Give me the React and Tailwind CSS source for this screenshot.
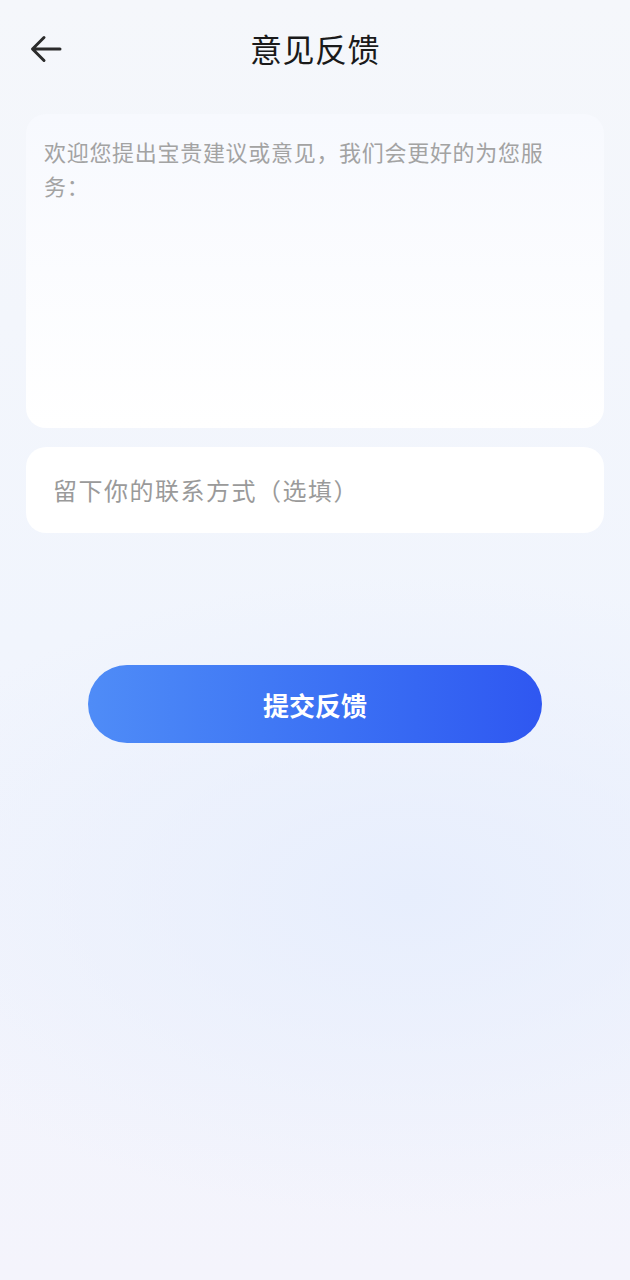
import { useState } from 'react'

export default function App() {
  const [advice, setAdvice] = useState('')
  const [contact, setContact] = useState('')

  return (
    <div
      className="min-h-[1280px] w-full bg-[#f3f6fc] bg-[radial-gradient(ellipse_90%_25%_at_65%_70%,#e7eefd_0%,rgba(231,238,253,0)_100%),linear-gradient(180deg,#f5f7fb_0%,#f1f5fd_50%,#f4f4fc_100%)] font-['Noto_Sans_CJK_SC',sans-serif]"
    >
      {/* Header */}
      <div className="relative flex h-[96px] items-center justify-center">
        <button className="absolute left-[28px] top-[33px] p-0 text-[#2b2b2b]">
          <svg width="36" height="32" viewBox="0 0 36 32" fill="none">
            <path d="M32 16H5M16 4.5L4.5 16L16 27.5" stroke="currentColor" strokeWidth="3" strokeLinecap="round" strokeLinejoin="round" />
          </svg>
        </button>
        <h1 className="text-[32px] leading-none tracking-[0.5px] text-[#1a1a1a]">意见反馈</h1>
      </div>

      <div className="mt-[18px] flex flex-col gap-[19px] px-[26px]">
        <div className="h-[314px] rounded-[20px] bg-gradient-to-b from-[#f7f9fe] to-white px-[18px] pt-[20px]">
          <textarea
            value={advice}
            onChange={e => setAdvice(e.target.value)}
            placeholder="欢迎您提出宝贵建议或意见，我们会更好的为您服务："
            className="h-full w-full resize-none bg-transparent text-[22px] leading-[34px] tracking-[0.7px] text-[#333] outline-none placeholder:text-[#a3a3a3]"
          />
        </div>

        <div className="flex h-[86px] items-center rounded-[20px] bg-white/95 px-[27px]">
          <input
            value={contact}
            onChange={e => setContact(e.target.value)}
            placeholder="留下你的联系方式（选填）"
            className="w-full bg-transparent text-[24px] tracking-[1.5px] text-[#333] outline-none placeholder:text-[#9a9a9a]"
          />
        </div>
      </div>

      <div className="mt-[132px] flex justify-center">
        <button className="h-[78px] w-[454px] rounded-full bg-gradient-to-r from-[#4f8cf7] to-[#2f57f1] text-[26px] font-bold text-white">
          提交反馈
        </button>
      </div>
    </div>
  )
}
